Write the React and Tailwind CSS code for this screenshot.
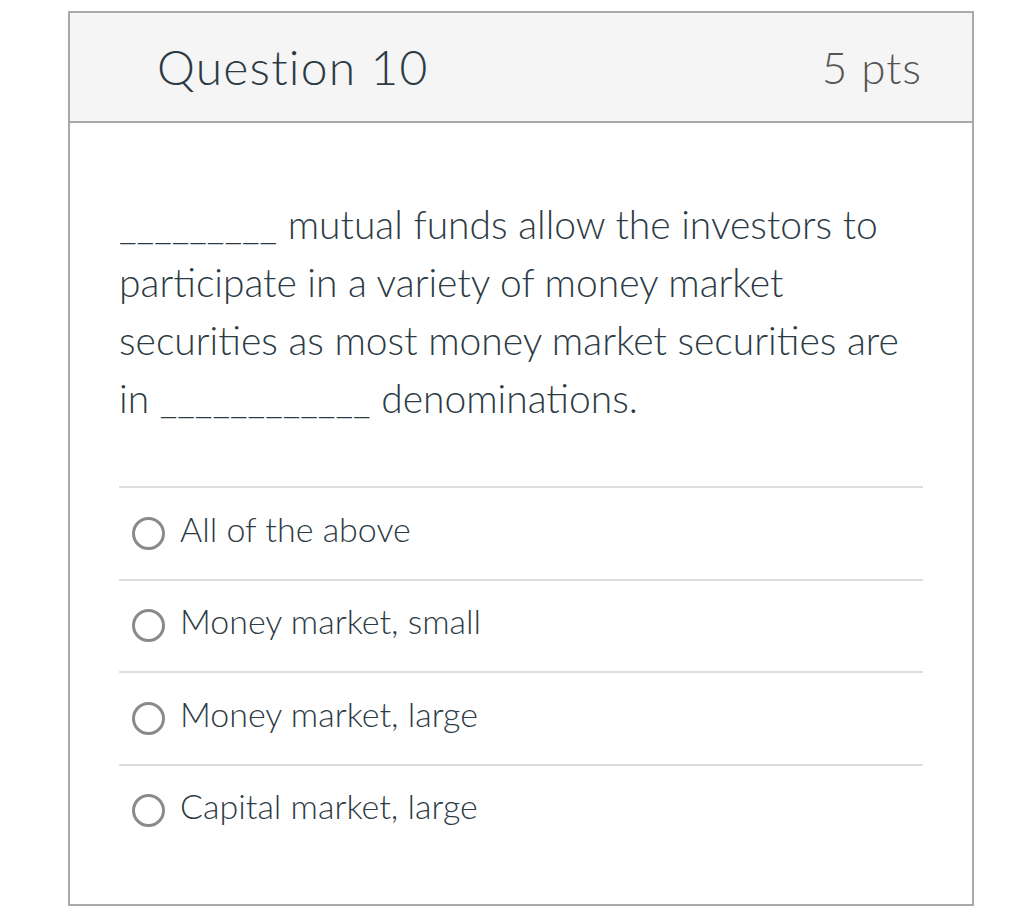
const options = [
  "All of the above",
  "Money market, small",
  "Money market, large",
  "Capital market, large",
];

export default function App() {
  return (
    <div
      className="min-h-[918px] bg-white pt-[11px] pl-[68px]"
      style={{ fontFamily: "Lato, 'Noto Sans', sans-serif" }}
    >
      <div className="flex h-[895px] w-[906px] flex-col border-2 border-[#a9a9a9]">
        <div className="flex h-[110px] items-center justify-between border-b-2 border-[#a9a9a9] bg-[#f5f5f5] pr-[50px] pl-[87px]">
          <h2 className="text-[48px] font-light tracking-[1.2px] text-[#2d3b45]">
            Question 10
          </h2>
          <span className="text-[44px] font-light tracking-[1px] text-[#555]">
            5 pts
          </span>
        </div>

        <div className="px-[49px] pt-[72px]">
          <p className="text-[39px] leading-[58px] font-light text-[#2d3b45]">
            _________ mutual funds allow the investors to participate in a
            variety of money market securities as most money market securities
            are in ____________ denominations.
          </p>

          <div className="mt-[59px]">
            {options.map((opt) => (
              <label
                key={opt}
                className="flex h-[92.5px] items-center gap-[15px] border-t-2 border-[#dedede] pl-[13px]"
              >
                <span className="h-[33px] w-[33px] shrink-0 rounded-full border-[3px] border-[#8a8a8a]" />
                <span className="-mt-[10px] text-[34px] font-light text-[#2d3b45]">
                  {opt}
                </span>
              </label>
            ))}
          </div>
        </div>
      </div>
    </div>
  );
}
